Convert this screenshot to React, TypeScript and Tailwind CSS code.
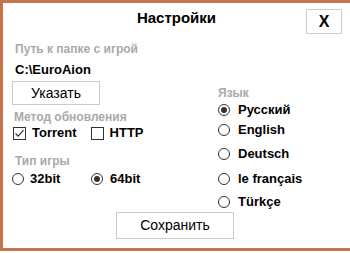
import React from "react"

const font = { fontFamily: '"Liberation Sans", Arial, sans-serif' }

function Radio({ checked }: { checked?: boolean }) {
    return (
        <span className="flex h-[12px] w-[12px] shrink-0 items-center justify-center rounded-full border border-[#333333] bg-white">
            {checked && <span className="h-[6px] w-[6px] rounded-full bg-[#333333]" />}
        </span>
    )
}

function Checkbox({ checked }: { checked?: boolean }) {
    return (
        <span className="flex h-[13px] w-[13px] shrink-0 items-center justify-center border border-[#333333] bg-white">
            {checked && (
                <svg width="11" height="11" viewBox="0 0 11 11">
                    <path d="M1.5 5.5 L4.2 8.2 L9.5 2.2" fill="none" stroke="#333333" strokeWidth="1.2" />
                </svg>
            )}
        </span>
    )
}

function GroupLabel({ children }: { children: React.ReactNode }) {
    return <span className="text-[12px] font-bold leading-none text-[#a9a9a9]">{children}</span>
}

export default function App() {
    const languages = [
        { label: "Русский", checked: true, h: "h-[16px]" },
        { label: "English", h: "h-[24px]" },
        { label: "Deutsch", h: "h-[24px]" },
        { label: "le français", h: "h-[25px]" },
        { label: "Türkçe", h: "h-[21px]" },
    ]

    return (
        <div className="h-[253px] w-[350px] overflow-hidden bg-white text-black" style={font}>
            <div className="flex h-[251px] w-[350px] flex-col border-b-[3px] border-l-[3px] border-t-[3px] border-[#c27650] bg-white">
                {/* header */}
                <div className="grid h-[33px] grid-cols-[1fr_auto_1fr] items-start">
                    <div />
                    <div className="pt-[6px] text-[15px] font-bold leading-[18px]">Настройки</div>
                    <div className="flex justify-end pr-[8px] pt-[6px]">
                        <button className="flex h-[25px] w-[36px] items-center justify-center border border-[#cccccc] bg-white text-[16px] font-bold">
                            X
                        </button>
                    </div>
                </div>

                {/* body */}
                <div className="flex">
                    <div className="flex w-[206px] flex-col pl-[9px]">
                        <div className="flex h-[25px] items-center pl-[3px]">
                            <GroupLabel>Путь к папке с игрой</GroupLabel>
                        </div>
                        <div className="flex h-[18px] items-center pl-[3px] text-[13px] font-bold">C:\EuroAion</div>
                        <button className="mt-[2px] h-[24px] w-[88px] border border-[#cccccc] bg-white text-[14px]">
                            Указать
                        </button>
                        <div className="mt-[3px] flex h-[18px] items-center pl-[2px]">
                            <GroupLabel>Метод обновления</GroupLabel>
                        </div>
                        <div className="flex h-[14px] items-center text-[13px] font-bold">
                            <div className="flex items-center gap-[6px] pl-[1px]">
                                <Checkbox checked />
                                <span>Torrent</span>
                            </div>
                            <div className="ml-[14px] flex items-center gap-[6px]">
                                <Checkbox />
                                <span>HTTP</span>
                            </div>
                        </div>
                        <div className="mt-[12px] flex h-[18px] items-center pl-[3px]">
                            <GroupLabel>Тип игры</GroupLabel>
                        </div>
                        <div className="flex h-[17px] items-center text-[13px] font-bold">
                            <div className="flex w-[79px] items-center gap-[6px]">
                                <Radio />
                                <span>32bit</span>
                            </div>
                            <div className="flex items-center gap-[7px]">
                                <Radio checked />
                                <span>64bit</span>
                            </div>
                        </div>
                    </div>

                    <div className="flex flex-col pl-[9px]">
                        <div className="mt-[48px] flex h-[18px] items-center">
                            <GroupLabel>Язык</GroupLabel>
                        </div>
                        {languages.map((l) => (
                            <div key={l.label} className={`flex items-center gap-[8px] text-[13px] font-bold ${l.h}`}>
                                <Radio checked={l.checked} />
                                <span>{l.label}</span>
                            </div>
                        ))}
                    </div>
                </div>

                <button className="ml-[113px] h-[27px] w-[118px] border border-[#cccccc] bg-white text-[14px]">
                    Сохранить
                </button>
            </div>
        </div>
    )
}
